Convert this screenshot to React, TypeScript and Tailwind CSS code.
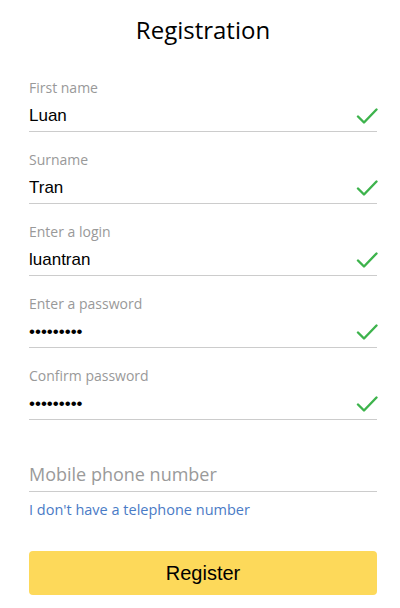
const Check = () => (
  <svg width="22" height="20" viewBox="0 0 22 20" fill="none" className="shrink-0 mr-[-1px]">
    <path d="M2 10.5L8 16.5L20.5 3.5" stroke="#3db34c" strokeWidth="2.4" strokeLinecap="round" strokeLinejoin="round" />
  </svg>
);

const fields = [
  { label: "First name", value: "Luan" },
  { label: "Surname", value: "Tran" },
  { label: "Enter a login", value: "luantran" },
  { label: "Enter a password", value: "•••••••••" },
  { label: "Confirm password", value: "•••••••••" },
];

export default function App() {
  return (
    <div className="w-[400px] h-[608px] bg-white pl-[29px] pr-[23px] overflow-hidden">
      <div className="h-[60px] flex items-center justify-center">
        <h1 className="text-[24px] text-black font-['Open_Sans',sans-serif] leading-none">Registration</h1>
      </div>

      {fields.map((f) => (
        <div key={f.label} className="pt-[18px] pb-[1px] border-b border-[#cccccc]">
          <div className="h-[20px] text-[14px] leading-[20px] text-[#999999] font-['Open_Sans',sans-serif]">{f.label}</div>
          <div className="mt-[4px] h-[28px] flex items-center justify-between">
            <span className="text-[17px] text-black font-['Liberation_Sans',sans-serif]">{f.value}</span>
            <Check />
          </div>
        </div>
      ))}

      <div className="pt-[40px] pb-[3px] border-b border-[#cccccc]">
        <div className="h-[28px] flex items-center text-[18px] text-[#9a9a9a] font-['Open_Sans',sans-serif]">
          Mobile phone number
        </div>
      </div>

      <div className="mt-[8px] text-[14.5px] leading-[20px] text-[#4a7bc6] font-['Open_Sans',sans-serif]">
        I don't have a telephone number
      </div>

      <button className="mt-[31px] w-full h-[44px] rounded-[4px] bg-[#fdd95a] flex items-center justify-center text-[20px] text-black font-['Liberation_Sans',sans-serif]">
        Register
      </button>
    </div>
  );
}
